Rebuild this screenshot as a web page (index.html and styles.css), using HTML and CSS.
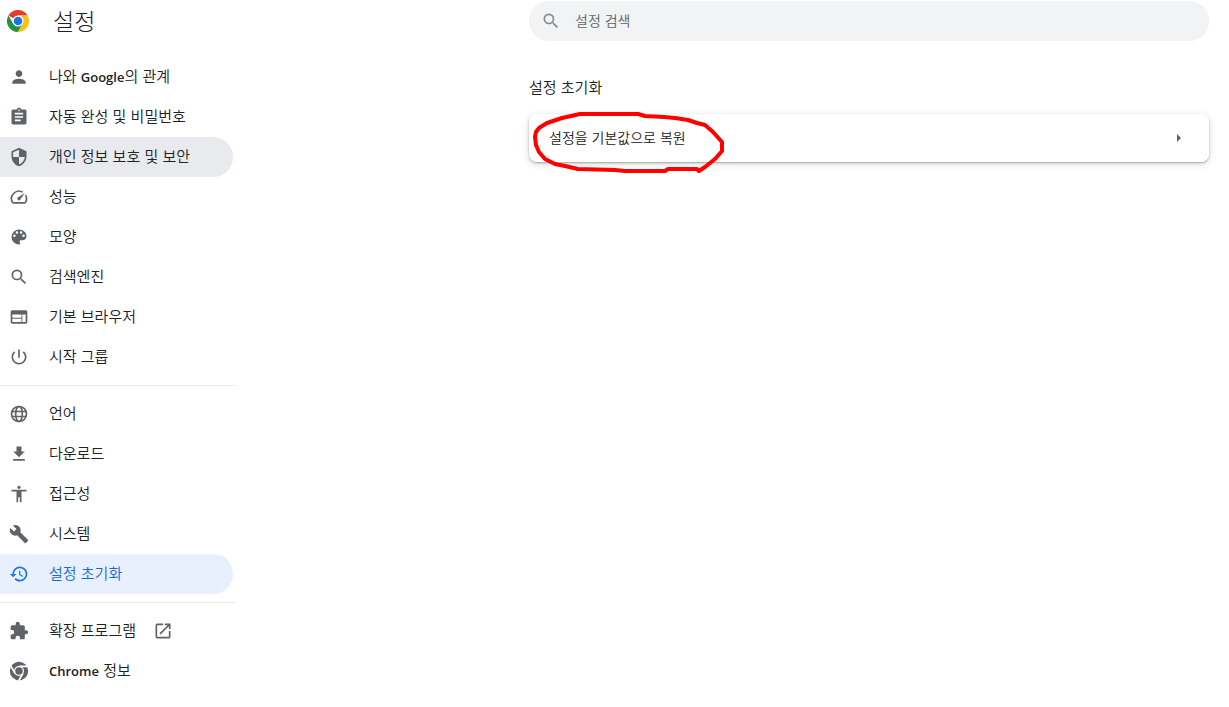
FILE: index.html
```html
<!DOCTYPE html>
<html lang="ko">
<head>
    <meta charset="UTF-8">
    <meta name="viewport" content="width=device-width, initial-scale=1.0">
    <title>설정</title>
    <link rel="stylesheet" href="styles.css">
</head>
<body>
    <header class="toolbar">
        <div class="brand">
            <svg class="logo" viewBox="0 0 48 48" aria-hidden="true">
                <path fill="#e33b2e" d="M24 24 4.900 13A22 22 0 0 1 43.100 13L24 13z"/>
                <path fill="#229342" d="M4.900 13A22 22 0 0 0 24 46L33.500 29.500 24 24 14.500 29.500z"/>
                <path fill="#fbc116" d="M24 46A22 22 0 0 0 43.100 13H24L33.500 29.500z"/>
                <circle cx="24" cy="24" r="11" fill="#fff"/>
                <circle cx="24" cy="24" r="8.500" fill="#1a73e8"/>
            </svg>
            <h1>설정</h1>
        </div>
        <label class="search">
            <svg class="icon" viewBox="0 0 24 24" aria-hidden="true"><path d="M15.5 14h-.79l-.28-.27A6.47 6.47 0 0 0 16 9.5 6.5 6.5 0 1 0 9.5 16c1.61 0 3.09-.59 4.23-1.57l.27.28v.79l5 4.99L20.49 19l-4.99-5zm-6 0a4.5 4.5 0 1 1 0-9 4.5 4.5 0 0 1 0 9z"/></svg>
            <input type="search" placeholder="설정 검색" aria-label="설정 검색">
        </label>
    </header>

    <div class="container">
        <nav class="sidebar">
            <a href="#people" class="item">
                <svg class="icon" viewBox="0 0 24 24"><path d="M12 12c2.21 0 4-1.79 4-4s-1.79-4-4-4-4 1.790-4 4 1.790 4 4 4zm0 2c-2.670 0-8 1.340-8 4v2h16v-2c0-2.660-5.330-4-8-4z"/></svg>
                <span>나와 <b>Google</b>의 관계</span>
            </a>
            <a href="#autofill" class="item">
                <svg class="icon" viewBox="0 0 24 24"><path d="M19 3h-4.180C14.400 1.840 13.300 1 12 1s-2.400.840-2.820 2H5c-1.100 0-2 .9-2 2v14c0 1.100.9 2 2 2h14c1.100 0 2-.9 2-2V5c0-1.100-.9-2-2-2zm-7 0c.550 0 1 .450 1 1s-.450 1-1 1-1-.450-1-1 .450-1 1-1zm2 14H7v-2h7v2zm3-4H7v-2h10v2zm0-4H7V7h10v2z"/></svg>
                <span>자동 완성 및 비밀번호</span>
            </a>
            <a href="#privacy" class="item hovered">
                <svg class="icon" viewBox="0 0 24 24"><path d="M12 1 3 5v6c0 5.550 3.840 10.740 9 12 5.160-1.260 9-6.450 9-12V5l-9-4zm0 10.990h7c-.530 4.120-3.280 7.790-7 8.940V12H5V6.300l7-3.110v8.800z"/></svg>
                <span>개인 정보 보호 및 보안</span>
            </a>
            <a href="#performance" class="item">
                <svg class="icon" viewBox="0 0 24 24"><path d="m20.380 8.570-1.230 1.850a8 8 0 0 1-.220 7.580H5.070A8 8 0 0 1 15.580 6.850l1.850-1.230A10 10 0 0 0 3.350 19a2 2 0 0 0 1.720 1h13.850a2 2 0 0 0 1.740-1 10 10 0 0 0-.270-10.440zm-9.790 6.840a2 2 0 0 0 2.830 0l5.660-8.490-8.490 5.660a2 2 0 0 0 0 2.830z"/></svg>
                <span>성능</span>
            </a>
            <a href="#appearance" class="item">
                <svg class="icon" viewBox="0 0 24 24"><path d="M12 3a9 9 0 0 0 0 18c.830 0 1.500-.670 1.500-1.500 0-.390-.150-.740-.390-1.010-.230-.260-.380-.610-.380-.990 0-.830.670-1.500 1.500-1.500H16c2.760 0 5-2.240 5-5 0-4.420-4.030-8-9-8zm-5.500 9a1.500 1.500 0 1 1 0-3 1.500 1.500 0 0 1 0 3zm3-4a1.500 1.500 0 1 1 0-3 1.500 1.500 0 0 1 0 3zm5 0a1.500 1.500 0 1 1 0-3 1.500 1.500 0 0 1 0 3zm3 4a1.500 1.500 0 1 1 0-3 1.500 1.500 0 0 1 0 3z"/></svg>
                <span>모양</span>
            </a>
            <a href="#search" class="item">
                <svg class="icon" viewBox="0 0 24 24"><path d="M15.5 14h-.79l-.28-.27A6.47 6.47 0 0 0 16 9.5 6.5 6.5 0 1 0 9.5 16c1.61 0 3.09-.59 4.23-1.57l.27.28v.79l5 4.99L20.49 19l-4.99-5zm-6 0a4.5 4.5 0 1 1 0-9 4.5 4.5 0 0 1 0 9z"/></svg>
                <span>검색엔진</span>
            </a>
            <a href="#browser" class="item">
                <svg class="icon" viewBox="0 0 24 24"><path d="M20 4H4c-1.100 0-1.990.9-1.990 2L2 18c0 1.100.9 2 2 2h16c1.100 0 2-.9 2-2V6c0-1.100-.9-2-2-2zm-5 14H4v-4h11v4zm0-5H4V9h11v4zm5 5h-4V9h4v9z"/></svg>
                <span>기본 브라우저</span>
            </a>
            <a href="#startup" class="item">
                <svg class="icon" viewBox="0 0 24 24"><path d="M13 3h-2v10h2V3zm4.830 2.170-1.420 1.420A6.920 6.920 0 0 1 19 12a7 7 0 1 1-11.420-5.420L6.170 5.170A8.930 8.930 0 0 0 3 12a9 9 0 0 0 18 0c0-2.740-1.230-5.180-3.170-6.830z"/></svg>
                <span>시작 그룹</span>
            </a>
            <hr>
            <a href="#languages" class="item">
                <svg class="icon line" viewBox="0 0 24 24"><circle cx="12" cy="12" r="9"/><ellipse cx="12" cy="12" rx="4" ry="9"/><path d="M3.500 9h17M3.500 15h17"/></svg>
                <span>언어</span>
            </a>
            <a href="#downloads" class="item">
                <svg class="icon" viewBox="0 0 24 24"><path d="M19 9h-4V3H9v6H5l7 7 7-7zM5 18v2h14v-2H5z"/></svg>
                <span>다운로드</span>
            </a>
            <a href="#accessibility" class="item">
                <svg class="icon" viewBox="0 0 24 24"><path d="M12 2c1.100 0 2 .9 2 2s-.9 2-2 2-2-.9-2-2 .9-2 2-2zm9 7h-6v13h-2v-6h-2v6H9V9H3V7h18v2z"/></svg>
                <span>접근성</span>
            </a>
            <a href="#system" class="item">
                <svg class="icon" viewBox="0 0 24 24"><path d="m22.700 19-9.100-9.100c.9-2.300.4-5-1.500-6.900-2-2-5-2.400-7.400-1.300L9 6 6 9 1.600 4.700C.4 7.100.9 10.100 2.900 12.100c1.900 1.900 4.600 2.400 6.900 1.500l9.100 9.100c.4.4 1 .4 1.400 0l2.300-2.300c.5-.4.5-1.100.1-1.400z"/></svg>
                <span>시스템</span>
            </a>
            <a href="#reset" class="item selected" aria-current="page">
                <svg class="icon" viewBox="0 0 24 24"><path d="M13 3a9 9 0 0 0-9 9H1l3.890 3.890.070.140L9 12H6c0-3.870 3.130-7 7-7s7 3.130 7 7-3.130 7-7 7a6.980 6.980 0 0 1-4.940-2.060l-1.420 1.420A9 9 0 1 0 13 3zm-1 5v5l4.280 2.540.720-1.210-3.500-2.080V8H12z"/></svg>
                <span>설정 초기화</span>
            </a>
            <hr>
            <a href="#extensions" class="item">
                <svg class="icon" viewBox="0 0 24 24"><path d="M20.500 11H19V7c0-1.100-.9-2-2-2h-4V3.500a2.500 2.500 0 0 0-5 0V5H4c-1.100 0-1.990.9-1.990 2v3.800H3.500a2.700 2.700 0 0 1 0 5.400H2V20c0 1.100.9 2 2 2h3.800v-1.500a2.700 2.700 0 0 1 5.400 0V22H17c1.100 0 2-.9 2-2v-4h1.500a2.500 2.500 0 0 0 0-5z"/></svg>
                <span>확장 프로그램</span>
                <svg class="icon external" viewBox="0 0 24 24"><path d="M19 19H5V5h7V3H5a2 2 0 0 0-2 2v14a2 2 0 0 0 2 2h14c1.100 0 2-.9 2-2v-7h-2v7zM14 3v2h3.590l-9.830 9.830 1.410 1.410L19 6.410V10h2V3h-7z"/></svg>
            </a>
            <a href="#about" class="item">
                <svg class="icon" viewBox="0 0 24 24">
                    <circle cx="12" cy="12" r="11"/>
                    <circle cx="12" cy="12" r="6" class="gap"/>
                    <path class="gap" d="M12 6.500h10M7.240 14.750l-5-8.660M16.760 14.750l-5 8.660"/>
                    <circle cx="12" cy="12" r="4.500"/>
                </svg>
                <span><b>Chrome</b> 정보</span>
            </a>
        </nav>

        <main class="content">
            <h2>설정 초기화</h2>
            <div class="card">
                <button type="button" class="card-row">
                    <span>설정을 기본값으로 복원</span>
                    <svg class="icon" viewBox="0 0 20 20" aria-hidden="true"><path d="M8 6v8l4-4z"/></svg>
                </button>
                <svg class="marker" viewBox="0 0 200 60" aria-hidden="true"><path d="M51 0H109L116 2 135 3 146 4 159 6 168 9 176 11 184 18 193 28V37L186 45 176 53 170 57 168 55 139 55 136 57H96L86 56 49 55 36 52 26 50 16 45 10 38 7 31 6 23 7 18 10 14 18 9 33 4z"/></svg>
            </div>
        </main>
    </div>
</body>
</html>
```
FILE: styles.css
```css
* {
    box-sizing: border-box;
}
body {
    margin: 0;
    background: #fff;
    color: #202124;
    font-family: "Noto Sans CJK KR", sans-serif;
    font-size: 14px;
    font-weight: 350;
    line-height: 20px;
}
h1, h2 {
    margin: 0;
    font-weight: 350;
}
.icon {
    width: 20px;
    height: 20px;
    flex: none;
    fill: #5f6368;
}
.line {
    fill: none;
    stroke: #5f6368;
    stroke-width: 2;
}

/* top bar */
.toolbar {
    display: flex;
    justify-content: space-between;
    padding: 1px 20px 0 6px;
}
.brand {
    display: flex;
    align-items: center;
    gap: 23px;
}
.logo {
    width: 24px;
    height: 24px;
}
.brand h1 {
    padding-bottom: 2px;
    font-size: 23px;
    font-weight: 300;
    line-height: 38px;
}
.search {
    display: flex;
    align-items: center;
    gap: 14px;
    width: 680px;
    height: 40px;
    padding: 0 12px;
    border-radius: 20px;
    background: #f1f3f4;
}
.search .icon {
    fill: #85888c;
}
.search input {
    flex: 1;
    min-width: 0;
    padding: 0 0 2px;
    border: none;
    outline: none;
    background: none;
    font: inherit;
}
.search input::placeholder {
    color: #5f6368;
}

.container {
    display: flex;
    justify-content: space-between;
}

/* menu */
.sidebar {
    width: 235px;
    padding-top: 16px;
}
.item {
    display: flex;
    align-items: center;
    gap: 20px;
    height: 40px;
    margin-right: 2px;
    padding-left: 9px;
    border-radius: 0 20px 20px 0;
    color: #202124;
    font-size: 15px;
    text-decoration: none;
}
.item span {
    padding-bottom: 2px;
}
.item b {
    font-family: "Open Sans", sans-serif;
    font-size: 13px;
    font-weight: 600;
}
.item .external {
    margin-left: -3px;
}
.hovered {
    background: #e8eaed;
}
.selected {
    background: #e8f0fe;
    color: #1967d2;
}
.selected .icon {
    fill: #1a73e8;
}
.sidebar hr {
    height: 1px;
    margin: 8px 0;
    border: none;
    background: #e8e8e8;
}
.icon .gap {
    fill: none;
    stroke: #fff;
    stroke-width: 2;
}
.icon circle.gap {
    fill: #fff;
    stroke: none;
}

/* page */
.content {
    width: 680px;
    margin-right: 20px;
    padding-top: 36px;
}
.content h2 {
    margin-bottom: 17px;
    font-size: 15px;
    line-height: 20px;
}
.card {
    position: relative;
    border-radius: 8px;
    box-shadow: 0 1px 2px rgba(60, 64, 67, 0.4), 0 2px 6px 1px rgba(60, 64, 67, 0.15);
}
.card-row {
    display: flex;
    align-items: center;
    justify-content: space-between;
    width: 100%;
    height: 48px;
    padding: 0 20px;
    border: none;
    border-radius: 8px;
    background: #fff;
    color: #202124;
    font: inherit;
}
.card-row span {
    padding-bottom: 2px;
}
.marker {
    position: absolute;
    top: 0;
    left: 0;
    width: 200px;
    height: 60px;
    overflow: visible;
    fill: none;
    stroke: #f00;
    stroke-width: 4;
    stroke-linejoin: round;
    pointer-events: none;
}
```
